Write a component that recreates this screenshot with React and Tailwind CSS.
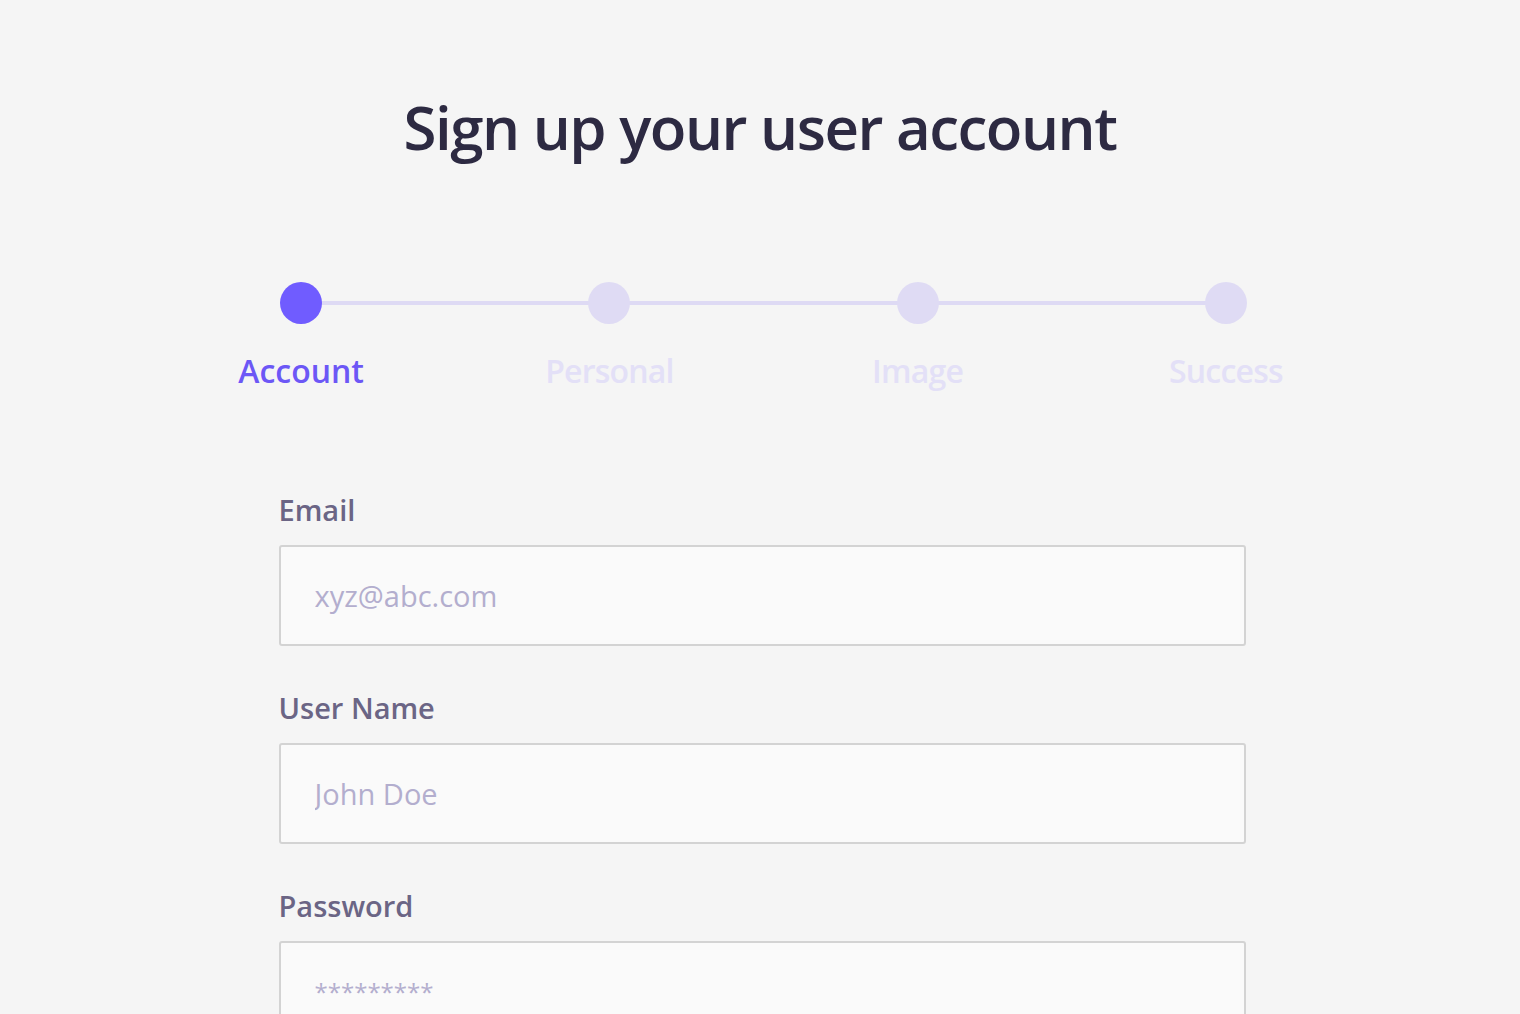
import React from 'react';

const steps = [
  { label: 'Account', active: true },
  { label: 'Personal', active: false },
  { label: 'Image', active: false },
  { label: 'Success', active: false },
];

const fields = [
  { label: 'Email', placeholder: 'xyz@abc.com', type: 'email', size: 'text-[29px]' },
  { label: 'User Name', placeholder: 'John Doe', type: 'text', size: 'text-[29px]' },
  { label: 'Password', placeholder: '*********', type: 'text', size: 'text-[24px]' },
];

const App = () => {
  return (
    <div className="min-h-screen bg-[#f5f5f5] font-['Open_Sans',sans-serif] overflow-hidden">
      <h1 className="pt-[87px] text-center text-[60px] leading-[80px] font-semibold text-[#2d2a42] tracking-[-1.5px]">
        Sign up your user account
      </h1>

      <div className="flex justify-center pl-[7px] mt-[115px]">
        <div className="relative w-[1233px] grid grid-cols-4">
          <div className="absolute top-[19px] left-[154px] right-[154px] h-[4px] bg-[#dedaf4]" />
          {steps.map((step) => (
            <div key={step.label} className="relative flex flex-col items-center">
              <div className={`w-[42px] h-[42px] rounded-full ${step.active ? 'bg-[#705cff]' : 'bg-[#dfdbf4]'}`} />
              <span className={`mt-[27px] text-[32px] leading-[40px] font-semibold ${step.active ? 'text-[#6c57f6]' : 'text-[#e3e0f7] tracking-[-0.8px]'}`}>
                {step.label}
              </span>
            </div>
          ))}
        </div>
      </div>

      <div className="flex justify-center pl-[4px] mt-[101px]">
        <form className="w-[967px] flex flex-col gap-[44px]">
          {fields.map((field) => (
            <div key={field.label} className="flex flex-col">
              <label className="text-[29px] leading-[36px] font-semibold text-[#6b6585]">{field.label}</label>
              <input
                type={field.type}
                placeholder={field.placeholder}
                className={`mt-[17px] h-[101px] w-full rounded-[3px] border-2 border-[#d3d3d3] bg-[#fafafa] px-[34px] ${field.size} text-[#2d2a42] placeholder:text-[#b3aece] outline-none`}
              />
            </div>
          ))}
        </form>
      </div>
    </div>
  );
};

export default App;
